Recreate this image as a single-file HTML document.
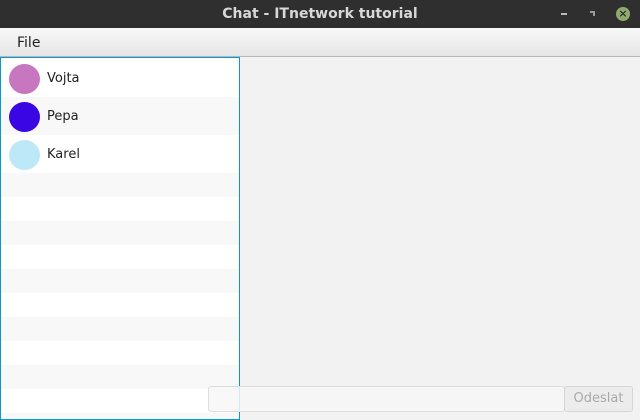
<html><head><style>
html,body{margin:0;width:640px;height:420px;overflow:hidden}
body{background:#f2f2f2;font-family:"DejaVu Sans","Liberation Sans",sans-serif;position:relative}
.tb{position:absolute;left:0;top:0;width:640px;height:28px;background:#2f2f2f;color:#d8d8d8;font-weight:bold;font-size:14px;text-align:center;line-height:29px}
.mb{position:absolute;left:0;top:28px;width:640px;height:28px;background:linear-gradient(#f8f8f8,#e6e6e6);border-bottom:1px solid #b8b8b8;font-size:14px;color:#222}
.list{position:absolute;left:0;top:57px;width:240px;height:363px;box-sizing:border-box;border:1px solid #0b98c8;background:#fff;overflow:hidden}
.r{height:38px;position:relative;font-size:13px;color:#222}
.r .c{position:absolute;left:8px;top:5px;width:31px;height:30px;border-radius:50%}
.r span{position:absolute;left:46px;top:12px}
.s{height:24px}
.g{background:#f8f8f8}
.tf{position:absolute;left:208px;top:386px;width:355px;height:24px;border:1px solid #ddd;border-radius:3px;background:rgba(247,247,247,0.85)}
.bt{position:absolute;left:564px;top:386px;width:67px;height:24px;border:1px solid #d6d6d6;border-radius:3px;background:#ececec;color:#aaa;font-size:13px;text-align:center;line-height:24px}
</style></head><body>
<div class="tb">Chat - ITnetwork tutorial</div>
<div style="position:absolute;left:561px;top:13px;width:6px;height:2px;background:#bbb"></div>
<div style="position:absolute;left:590px;top:11px;width:5px;height:5px;border-top:2px solid #999;border-right:2px solid #999;box-sizing:border-box"></div>
<div style="position:absolute;left:616px;top:7px;width:14px;height:14px;border-radius:50%;background:#8faa6c;color:#2f2f2f;font-size:11px;font-weight:bold;text-align:center;line-height:14px">×</div>
<div class="mb"><span style="position:absolute;left:17px;top:7px">File</span></div>
<div class="list">
<div style="height:1px"></div>
<div class="r"><div class="c" style="background:#c776c0"></div><span>Vojta</span></div>
<div class="r g"><div class="c" style="background:#3a06e4"></div><span>Pepa</span></div>
<div class="r"><div class="c" style="background:#bde8f7"></div><span>Karel</span></div>
<div class="s g"></div><div class="s"></div><div class="s g"></div><div class="s"></div><div class="s g"></div><div class="s"></div><div class="s g"></div><div class="s"></div><div class="s g"></div><div class="s"></div><div class="s g"></div>
</div>
<div class="tf"></div>
<div class="bt">Odeslat</div>
</body></html>
